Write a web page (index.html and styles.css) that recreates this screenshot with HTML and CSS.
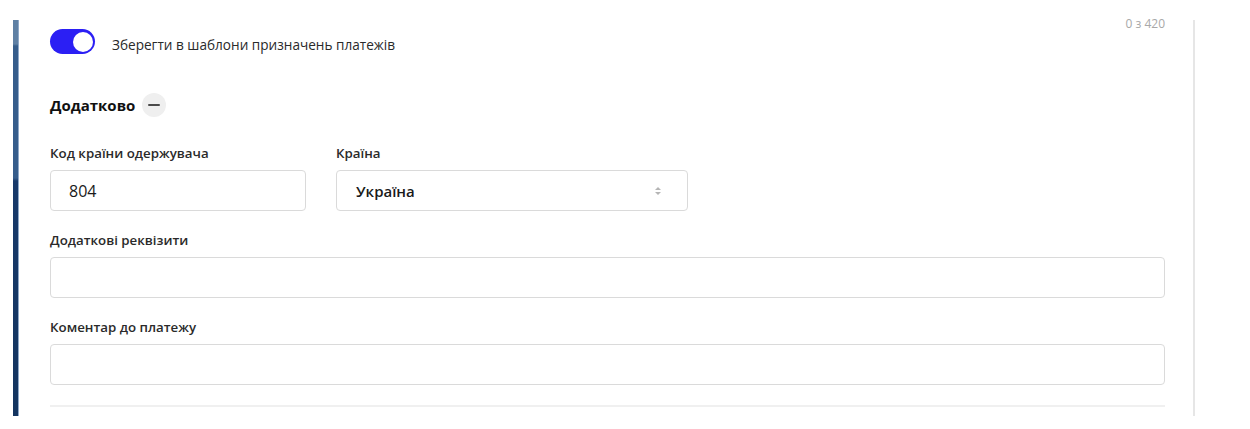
FILE: index.html
```html
<html>
  <head>
    <title>Додатково</title>
    <link rel="stylesheet" href="styles.css">
  </head>
  <body>
    <div class="page">
      <!-- Ліва смуга -->
      <div class="side-bar"></div>

      <div class="content">
        <!-- Лічильник символів -->
        <div class="counter">0 з 420</div>

        <!-- Перемикач шаблону -->
        <div class="toggle-row">
          <span class="toggle"><span class="knob"></span></span>
          <span class="toggle-label">Зберегти в шаблони призначень платежів</span>
        </div>

        <!-- Заголовок розділу -->
        <div class="section-title">
          <span>Додатково</span>
          <span class="collapse-btn"><span class="dash"></span></span>
        </div>

        <!-- Код країни та країна -->
        <div class="row">
          <div class="field field-code">
            <label class="label" for="code">Код країни одержувача</label>
            <input class="input" id="code" type="text" value="804">
          </div>
          <div class="field field-country">
            <label class="label">Країна</label>
            <div class="select">
              <span>Україна</span>
              <svg width="8" height="12" viewBox="0 0 8 12">
                <path d="M4 2 L7 5 L1 5 Z" fill="#b5b5b5"/>
                <path d="M4 10 L7 7 L1 7 Z" fill="#b5b5b5"/>
              </svg>
            </div>
          </div>
        </div>

        <div class="field">
          <label class="label" for="extra">Додаткові реквізити</label>
          <input class="input" id="extra" type="text">
        </div>

        <div class="field">
          <label class="label" for="comment">Коментар до платежу</label>
          <input class="input" id="comment" type="text">
        </div>

        <div class="divider"></div>
      </div>

      <!-- Права лінія -->
      <div class="side-line"></div>
    </div>
  </body>
</html>
```

FILE: styles.css
```css
/* Основа сторінки */
body {
  margin: 0;
  background: #ffffff;
  font-family: "Open Sans", "Noto Sans", sans-serif;
  color: #222222;
}

.page {
  display: flex;
  width: 1195px;
  margin-top: 20px;
  height: 396px;
}

/* Ліва смуга з градієнтом */
.side-bar {
  width: 6px;
  margin-left: 13px;
  background: linear-gradient(to bottom,
    #5f80a4 0px, #5f80a4 24px,
    #365d8b 26px, #365d8b 158px,
    #17396a 161px, #13345f 396px);
  box-shadow: inset -1px 0 0 #8ea8c8;
}

.content {
  flex: 1;
  padding-left: 31px;
  padding-right: 28px;
}

.side-line {
  width: 2px;
  background: #e6e6e6;
}

/* Лічильник */
.counter {
  height: 9px;
  line-height: 7px;
  font-size: 12px;
  color: #a8a8a8;
  text-align: right;
}

/* Перемикач */
.toggle-row {
  display: flex;
  align-items: center;
  height: 25px;
}

.toggle {
  display: flex;
  align-items: center;
  justify-content: flex-end;
  width: 45px;
  height: 25px;
  border-radius: 13px;
  background: #2b1ff4;
  padding-right: 2px;
  box-sizing: border-box;
}

.knob {
  width: 20px;
  height: 20px;
  border-radius: 50%;
  background: #ffffff;
}

.toggle-label {
  margin-left: 17px;
  margin-top: 6px;
  font-size: 13.6px;
  color: #2a2a2a;
}

/* Заголовок розділу */
.section-title {
  display: flex;
  align-items: center;
  height: 24px;
  margin-top: 39px;
  font-size: 15px;
  font-weight: 700;
  color: #111111;
}

.collapse-btn {
  display: flex;
  align-items: center;
  justify-content: center;
  width: 24px;
  height: 24px;
  margin-left: 7px;
  border-radius: 50%;
  background: #efefef;
}

.dash {
  width: 12px;
  height: 2px;
  border-radius: 1px;
  background: #4a4a4a;
}

/* Поля форми */
.row {
  display: flex;
  gap: 30px;
}

.field {
  display: flex;
  flex-direction: column;
  margin-top: 19px;
}

.row .field:first-child,
.row .field:last-child {
  margin-top: 26px;
}

.field-code {
  width: 256px;
}

.field-country {
  width: 352px;
}

.label {
  font-size: 13.3px;
  font-weight: 600;
  line-height: 20px;
  margin-bottom: 7px;
  color: #2a2a2a;
}

.input,
.select {
  height: 41px;
  border: 1px solid #dadada;
  border-radius: 4px;
  box-sizing: border-box;
  font-family: inherit;
  font-size: 16px;
  color: #1a1a1a;
  background: #ffffff;
}

.input {
  padding: 0 18px;
  outline: none;
}

.select {
  display: flex;
  align-items: center;
  justify-content: space-between;
  padding: 0 25px 0 19px;
  font-size: 15px;
  font-weight: 600;
}

/* Роздільник */
.divider {
  height: 2px;
  margin-top: 20px;
  background: #f0f0f0;
}
```
